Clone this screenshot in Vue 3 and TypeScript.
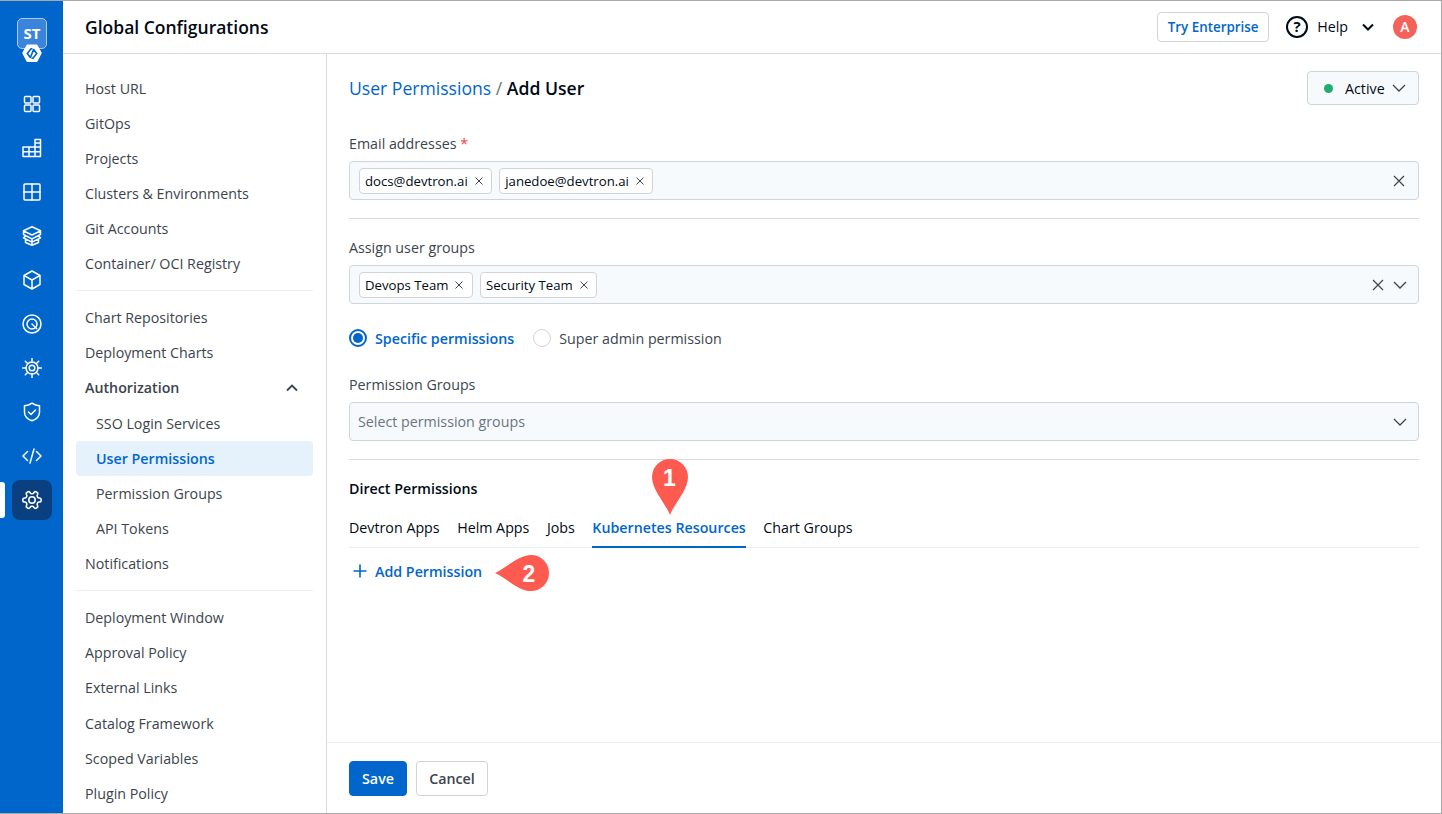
<script setup lang="ts">
const groups: { label: string; kind?: string }[][] = [
  [{ label: 'Host URL' }, { label: 'GitOps' }, { label: 'Projects' }, { label: 'Clusters & Environments' }, { label: 'Git Accounts' }, { label: 'Container/ OCI Registry' }],
  [{ label: 'Chart Repositories' }, { label: 'Deployment Charts' }, { label: 'Authorization', kind: 'head' }, { label: 'SSO Login Services', kind: 'sub' }, { label: 'User Permissions', kind: 'active' }, { label: 'Permission Groups', kind: 'sub' }, { label: 'API Tokens', kind: 'sub' }, { label: 'Notifications' }],
  [{ label: 'Deployment Window' }, { label: 'Approval Policy' }, { label: 'External Links' }, { label: 'Catalog Framework' }, { label: 'Scoped Variables' }, { label: 'Plugin Policy' }],
]
const emails = ['docs@devtron.ai', 'janedoe@devtron.ai']
const teams = ['Devops Team', 'Security Team']
const tabs = ['Devtron Apps', 'Helm Apps', 'Jobs', 'Kubernetes Resources', 'Chart Groups']
</script>

<template>
  <div class="app">
    <aside class="rail">
      <div class="logo">
        <div class="logo-box">ST</div>
        <svg class="logo-hex" width="20" height="19" viewBox="0 0 20 19">
          <path d="M5.500.5h9a1 1 0 0 1 .9.500l4.200 7.500a1 1 0 0 1 0 1l-4.200 8a1 1 0 0 1-.9.500h-9a1 1 0 0 1-.9-.500l-4.200-8a1 1 0 0 1 0-1L4.600 1a1 1 0 0 1 .9-.500z" fill="#fff" />
          <path d="M8.500 13.800 5.300 9.500 9 4.800h1.500M11.500 5.200l3.200 4.300L11 14.200H9.500M11.800 5 8.200 14" fill="none" stroke="#0066cc" stroke-width="1.600" />
        </svg>
      </div>
      <ul class="rail-list">
        <li class="rail-item">
          <svg class="ri" viewBox="0 0 20 20"><rect x="2.500" y="2.500" width="6.500" height="6.500" rx="1" /><rect x="11" y="2.500" width="6.500" height="6.500" rx="1" /><rect x="2.500" y="11" width="6.500" height="6.500" rx="1" /><rect x="11" y="11" width="6.500" height="6.500" rx="1" /></svg>
        </li>
        <li class="rail-item">
          <svg class="ri" viewBox="0 0 20 20"><path d="M1 9h12V5h0V1.500h5.500V18.500H1zM1 13.800h17.500M7 9v9.500M13 5v13.500M13 5h5.500M13 9h5.500" /></svg>
        </li>
        <li class="rail-item">
          <svg class="ri" viewBox="0 0 20 20"><rect x="2" y="2" width="16" height="16" rx="1" /><path d="M10 2v16M2 10h16" /></svg>
        </li>
        <li class="rail-item">
          <svg class="ri" viewBox="0 0 20 20"><path d="M10 .8 18.500 4.800 10 9 1.500 4.800zM1.500 4.800v3.700L10 12.800l8.500-4.300V4.800M1.500 8.500l2.500 1.300-2.500 2L10 16.200l8.500-4.400-2.500-2 2.500-1.300M3.500 13.200v3.300L10 19.300l6.500-2.800v-3.300M10 12.800v6.500" /></svg>
        </li>
        <li class="rail-item">
          <svg class="ri" viewBox="0 0 20 20"><path d="M10 1 18 5.500v9L10 19l-8-4.500v-9zM2.300 5.700 10 10l7.700-4.300M10 10v9" /></svg>
        </li>
        <li class="rail-item">
          <svg class="ri" viewBox="0 0 20 20"><circle cx="10" cy="10" r="9" /><circle cx="10" cy="10" r="5" /><path d="M10 10l4.800 4.800" /></svg>
        </li>
        <li class="rail-item">
          <svg class="ri" viewBox="0 0 20 20"><circle cx="10" cy="10" r="6" /><circle cx="10" cy="10" r="2.800" /><path d="M10 .5V4M10 16v3.500M.5 10H4M16 10h3.500M3.300 3.300l2.500 2.500M14.200 14.200l2.500 2.500M16.700 3.300l-2.500 2.500M5.800 14.200l-2.500 2.500" /></svg>
        </li>
        <li class="rail-item">
          <svg class="ri" viewBox="0 0 20 20"><path d="M10 1.200c2.300 1.600 4.800 2.400 7.500 2.600v6.400c0 4.200-3.200 7-7.500 8.600-4.300-1.600-7.500-4.400-7.500-8.600V3.800C5.200 3.600 7.700 2.800 10 1.200z" /><path d="m6.500 10 2.500 2.500 4.500-4.500" /></svg>
        </li>
        <li class="rail-item">
          <svg class="ri" viewBox="0 0 20 20"><path d="M5.500 5.500 1 10l4.500 4.500M14.500 5.500 19 10l-4.500 4.500M12 3 8 17" /></svg>
        </li>
        <li class="rail-item is-active">
          <span class="rail-mark"></span>
          <span class="rail-box">
            <svg class="ri gear" viewBox="0 0 24 24"><path d="M12.220 2h-.44a2 2 0 0 0-2 2v.18a2 2 0 0 1-1 1.730l-.43.250a2 2 0 0 1-2 0l-.15-.08a2 2 0 0 0-2.730.730l-.22.380a2 2 0 0 0 .730 2.730l.15.100a2 2 0 0 1 1 1.720v.510a2 2 0 0 1-1 1.740l-.15.090a2 2 0 0 0-.730 2.730l.22.380a2 2 0 0 0 2.730.730l.15-.08a2 2 0 0 1 2 0l.43.250a2 2 0 0 1 1 1.730V20a2 2 0 0 0 2 2h.44a2 2 0 0 0 2-2v-.18a2 2 0 0 1 1-1.730l.43-.25a2 2 0 0 1 2 0l.15.080a2 2 0 0 0 2.730-.730l.22-.390a2 2 0 0 0-.730-2.730l-.15-.08a2 2 0 0 1-1-1.740v-.5a2 2 0 0 1 1-1.740l.15-.090a2 2 0 0 0 .730-2.730l-.22-.38a2 2 0 0 0-2.730-.730l-.15.080a2 2 0 0 1-2 0l-.43-.25a2 2 0 0 1-1-1.730V4a2 2 0 0 0-2-2z" transform="rotate(90 12 12)" /><circle cx="12" cy="12" r="3.500" /></svg>
          </span>
        </li>
      </ul>
    </aside>

    <div class="shell">
      <header class="top">
        <h1 class="top-title">Global Configurations</h1>
        <div class="top-right">
          <button class="try">Try Enterprise</button>
          <svg class="help-icon" width="24" height="24" viewBox="0 0 24 24"><circle cx="12" cy="12" r="10" fill="none" stroke="#000a14" stroke-width="2" /><text x="12" y="16.500" text-anchor="middle" class="help-q">?</text></svg>
          <span class="help">Help</span>
          <svg class="help-chev" width="14" height="14" viewBox="0 0 14 14"><path d="m2 4.500 5 5 5-5" fill="none" stroke="#000a14" stroke-width="2" /></svg>
          <span class="avatar">A</span>
        </div>
      </header>

      <div class="body">
        <nav class="menu">
          <section v-for="(g, i) in groups" :key="i" class="menu-group">
            <div v-for="it in g" :key="it.label" class="menu-item" :class="it.kind">
              <span>{{ it.label }}</span>
              <svg v-if="it.kind === 'head'" width="14" height="14" viewBox="0 0 14 14"><path d="m2 9.500 5-5 5 5" fill="none" stroke="#3b444c" stroke-width="1.800" /></svg>
            </div>
          </section>
        </nav>

        <main class="main">
          <div class="form">
            <div class="crumb-row">
              <div class="crumb"><span class="crumb-link">User Permissions</span><span class="crumb-sep"> / </span><strong>Add User</strong></div>
              <button class="status"><span class="dot"></span><span>Active</span>
                <svg width="16" height="16" viewBox="0 0 16 16"><path d="m2 5 6 6 6-6" fill="none" stroke="#3b444c" stroke-width="1.300" /></svg>
              </button>
            </div>

            <label class="label email-label">Email addresses <span class="req">*</span></label>
            <div class="field">
              <span v-for="e in emails" :key="e" class="chip">{{ e }}<svg width="10" height="10" viewBox="0 0 10 10"><path d="m1.500 1.500 7 7m0-7-7 7" stroke="#3b444c" fill="none" /></svg></span>
              <svg class="clear" width="12" height="12" viewBox="0 0 12 12"><path d="m1 1 10 10m0-10L1 11" stroke="#3b444c" fill="none" stroke-width="1.200" /></svg>
            </div>
            <hr class="rule rule-a" />

            <label class="label">Assign user groups</label>
            <div class="field">
              <span v-for="t in teams" :key="t" class="chip">{{ t }}<svg width="10" height="10" viewBox="0 0 10 10"><path d="m1.500 1.500 7 7m0-7-7 7" stroke="#3b444c" fill="none" /></svg></span>
              <svg class="clear" width="12" height="12" viewBox="0 0 12 12"><path d="m1 1 10 10m0-10L1 11" stroke="#3b444c" fill="none" stroke-width="1.200" /></svg>
              <svg class="chev" width="16" height="16" viewBox="0 0 16 16"><path d="m2 5 6 6 6-6" fill="none" stroke="#3b444c" stroke-width="1.300" /></svg>
            </div>

            <div class="radios">
              <span class="radio on"><i></i></span><span class="radio-text on-text">Specific permissions</span>
              <span class="radio off"></span><span class="radio-text">Super admin permission</span>
            </div>

            <label class="label">Permission Groups</label>
            <div class="field placeholder">
              <span>Select permission groups</span>
              <svg class="chev auto" width="16" height="16" viewBox="0 0 16 16"><path d="m2 5 6 6 6-6" fill="none" stroke="#3b444c" stroke-width="1.300" /></svg>
            </div>
            <hr class="rule rule-b" />

            <h2 class="direct">Direct Permissions</h2>
            <div class="tabs">
              <div v-for="t in tabs" :key="t" class="tab" :class="{ current: t === 'Kubernetes Resources' }">{{ t }}</div>
            </div>
            <div class="add">
              <svg width="14" height="14" viewBox="0 0 14 14"><path d="M7 .5v13M.5 7h13" stroke="#0066cc" stroke-width="1.600" fill="none" /></svg>
              <span>Add Permission</span>
            </div>
          </div>

          <footer class="foot">
            <button class="save">Save</button>
            <button class="cancel">Cancel</button>
          </footer>

          <svg class="pin pin-1" width="38" height="58" viewBox="0 0 38 58">
            <path d="M19 57C15 46 1 32 1 19a18 18 0 0 1 36 0C37 32 23 46 19 57z" fill="#ff5a4f" />
            <text x="18.500" y="28" text-anchor="middle" class="pin-text">1</text>
          </svg>
          <svg class="pin pin-2" width="56" height="38" viewBox="0 0 56 38">
            <path d="M1 19C11 15 24 1 37 1a18 18 0 0 1 0 36C24 37 11 23 1 19z" fill="#ff5a4f" />
            <text x="35" y="28" text-anchor="middle" class="pin-text">2</text>
          </svg>
        </main>
      </div>
    </div>
  </div>
</template>

<style>
html, body { margin: 0; height: 100%; overflow: hidden; }
</style>

<style scoped>
.app {
  box-sizing: border-box;
  height: 814px;
  width: 1442px;
  display: flex;
  border: 1px solid #a9a9a9;
  border-left: 0;
  overflow: hidden;
  background: #fff;
  font-family: "Open Sans", "Liberation Sans", sans-serif;
  font-size: 14.250px;
  color: #000a14;
}
.rail {
  width: 63px;
  flex: none;
  background: #0066cc;
  display: flex;
  flex-direction: column;
  align-items: stretch;
}
.logo { position: relative; height: 80px; }
.logo-box {
  position: absolute;
  left: 17px;
  top: 17px;
  box-sizing: border-box;
  width: 30px;
  height: 31px;
  border: 1px solid #a9cbee;
  border-radius: 5px;
  background: #3b84dc;
  color: #fff;
  font-weight: 700;
  font-size: 15px;
  text-align: center;
  line-height: 28px;
}
.logo-hex { position: absolute; left: 22px; top: 43px; }
.rail-list { list-style: none; margin: 1px 0 0; padding: 0; }
.rail-item {
  position: relative;
  height: 44px;
  display: flex;
  align-items: center;
  justify-content: center;
}
.ri {
  width: 20px;
  height: 20px;
  fill: none;
  stroke: #fff;
  stroke-width: 1.500;
  stroke-linejoin: round;
  stroke-linecap: round;
}
.ri.gear { width: 22px; height: 22px; stroke-width: 1.700; }
.rail-box {
  width: 40px;
  height: 40px;
  border-radius: 8px;
  background: #0a3f80;
  display: flex;
  align-items: center;
  justify-content: center;
  margin-left: 1px;
}
.rail-mark {
  position: absolute;
  left: 0;
  top: 4px;
  width: 5px;
  height: 36px;
  border-radius: 0 3px 3px 0;
  background: #fff;
}
.shell { flex: 1; min-width: 0; display: flex; flex-direction: column; }
.top {
  box-sizing: border-box;
  height: 53px;
  flex: none;
  border-bottom: 1px solid #d8dbdf;
  display: flex;
  align-items: center;
  justify-content: space-between;
  padding: 0 22px;
}
.top-title { margin: 0; font-size: 17.500px; font-weight: 600; }
.top-right { display: flex; align-items: center; }
.try {
  box-sizing: border-box;
  height: 30px;
  width: 112px;
  margin-right: 16px;
  padding: 0;
  border: 1px solid #d0d4d9;
  border-radius: 4px;
  background: #fff;
  color: #0066cc;
  font: 600 13.400px "Open Sans", sans-serif;
}
.help-q { font: 700 15px "Open Sans", sans-serif; fill: #000a14; }
.help { margin-left: 8px; margin-right: 13px; padding-bottom: 2px; }
.help-chev { margin-right: 18px; }
.avatar {
  width: 24px;
  height: 24px;
  border-radius: 50%;
  background: #f5625c;
  color: #fff;
  font-size: 14px;
  font-weight: 600;
  text-align: center;
  line-height: 24px;
  margin-right: 2px;
  margin-left: 0;
}
.body { flex: 1; min-height: 0; display: flex; }
.menu {
  box-sizing: border-box;
  width: 264px;
  flex: none;
  padding: 16.500px 13px 0 13px;
  border-right: 1px solid #d8dbdf;
  overflow: hidden;
}
.menu-group { padding-bottom: 9px; margin-bottom: 8.800px; border-bottom: 1px solid #eceef1; }
.menu-group:last-child { border-bottom: 0; }
.menu-item {
  box-sizing: border-box;
  height: 35.150px;
  padding: 0 14px 0 9px;
  display: flex;
  align-items: center;
  justify-content: space-between;
  color: #3b444c;
  border-radius: 4px;
}
.menu-item.head { font-weight: 600; }
.menu-item.sub, .menu-item.active { padding-left: 20px; }
.menu-item.active { background: #e5f1fb; color: #0066cc; font-weight: 600; }
.main { flex: 1; min-width: 0; display: flex; flex-direction: column; position: relative; }
.form { flex: 1; padding: 0 22px; }
.crumb-row {
  display: flex;
  justify-content: space-between;
  align-items: center;
  height: 34px;
  margin-top: 17px;
}
.crumb { font-size: 17.600px; }
.crumb-link { color: #0066cc; }
.crumb-sep { color: #6b747d; }
.crumb strong { font-weight: 600; }
.status {
  box-sizing: border-box;
  width: 112px;
  height: 34px;
  display: flex;
  align-items: center;
  padding: 0 11px 0 16px;
  border: 1px solid #d0d4d9;
  border-radius: 4px;
  background: #f7fafc;
  color: #000a14;
  font: 14.250px "Open Sans", sans-serif;
}
.dot { width: 9px; height: 9px; border-radius: 50%; background: #1dad70; margin-right: 12px; }
.status svg { margin-left: auto; }
.label { display: block; height: 21px; line-height: 21px; margin-bottom: 7px; color: #3b444c; }
.email-label { margin-top: 28px; }
.req { color: #f33e3e; }
.field {
  box-sizing: border-box;
  height: 39px;
  display: flex;
  align-items: center;
  gap: 7px;
  padding: 0 10px 0 9px;
  border: 1px solid #d0d4d9;
  border-radius: 4px;
  background: #f7fafc;
}
.chip {
  box-sizing: border-box;
  height: 26px;
  display: flex;
  align-items: center;
  gap: 6px;
  padding: 0 7.500px 0 5px;
  border: 1px solid #d0d4d9;
  border-radius: 4px;
  background: #fff;
  font-size: 13.200px;
  color: #000a14;
}
.clear { margin-left: auto; margin-right: 3px; }
.chev { margin-left: -2px; margin-right: 0; }
.chev.auto { margin-left: auto; }
.placeholder { color: #6b747d; justify-content: flex-start; padding-left: 8px; }
.rule { border: 0; border-top: 1px solid #d8dbdf; margin: 0; }
.rule-a { margin: 18px 0 18px; }
.rule-b { margin: 18px 0 19px; }
.radios { display: flex; align-items: center; height: 20px; margin: 24px 0 26px; }
.radio { box-sizing: border-box; width: 18px; height: 18px; border-radius: 50%; flex: none; }
.radio.on { border: 2px solid #0066cc; display: flex; align-items: center; justify-content: center; background: #fff; }
.radio.on i { width: 10px; height: 10px; border-radius: 50%; background: #0066cc; }
.radio.off { border: 1px solid #d0d4d9; background: #fff; margin-left: 19px; }
.radio-text { margin-left: 8px; color: #3b444c; }
.on-text { color: #0066cc; font-weight: 600; }
.direct { margin: 0; font-size: 14.250px; font-weight: 600; line-height: 20px; }
.tabs {
  display: flex;
  gap: 17.500px;
  margin-top: 10px;
  margin-right: -1px;
  border-bottom: 1px solid #eceef1;
  height: 39px;
  box-sizing: border-box;
}
.tab { height: 39px; box-sizing: border-box; line-height: 38px; color: #000a14; }
.tab.current { color: #0066cc; font-weight: 600; border-bottom: 2px solid #0066cc; }
.add {
  display: flex;
  align-items: center;
  gap: 8px;
  margin-top: 13px;
  padding-left: 4px;
  height: 20px;
  color: #0066cc;
  font-weight: 600;
}
.foot {
  box-sizing: border-box;
  height: 71px;
  flex: none;
  border-top: 1px solid #eceef1;
  display: flex;
  align-items: flex-start;
  gap: 9px;
  padding: 17.500px 22px 0;
}
.save, .cancel {
  box-sizing: border-box;
  height: 35px;
  border-radius: 4px;
  font: 600 14.250px "Open Sans", sans-serif;
  padding: 0;
}
.save { width: 58px; background: #0066cc; border: 1px solid #0066cc; color: #fff; }
.cancel { width: 72px; background: #fff; border: 1px solid #d0d4d9; color: #3b444c; }
.pin { position: absolute; overflow: visible; }
.pin-1 { left: 324px; top: 404px; }
.pin-2 { left: 167px; top: 500px; }
.pin-text { font: 700 23px "Liberation Sans", sans-serif; fill: #fff; }
</style>
